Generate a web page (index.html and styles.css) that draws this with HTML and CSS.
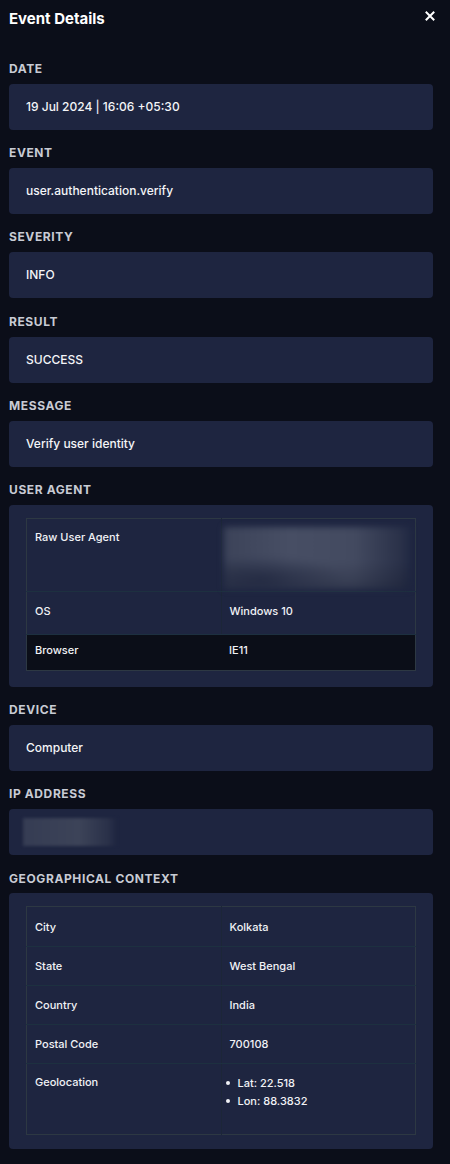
FILE: index.html
```html
<!DOCTYPE html>
<html>
<head>
<meta charset="utf-8">
<link rel="stylesheet" href="styles.css">
</head>
<body>
<div class="panel">
  <header class="head">
    <h1 class="title">Event Details</h1>
    <button class="close" aria-label="Close">
      <svg width="10" height="10" viewBox="0 0 10 10"><path d="M1.5 1.5 L8.5 8.5 M8.5 1.5 L1.5 8.5" stroke="#fff" stroke-width="2" stroke-linecap="square"/></svg>
    </button>
  </header>

  <section class="field">
    <div class="label">DATE</div>
    <div class="box">19 Jul 2024 <span class="sep">|</span> 16:06 +05:30</div>
  </section>
  <section class="field">
    <div class="label">EVENT</div>
    <div class="box">user.authentication.verify</div>
  </section>
  <section class="field">
    <div class="label">SEVERITY</div>
    <div class="box">INFO</div>
  </section>
  <section class="field">
    <div class="label">RESULT</div>
    <div class="box">SUCCESS</div>
  </section>
  <section class="field">
    <div class="label">MESSAGE</div>
    <div class="box">Verify user identity</div>
  </section>
  <section class="field">
    <div class="label">USER AGENT</div>
    <div class="box box-table box-ua">
      <table class="kv ua">
        <tr class="tall">
          <td>Raw User Agent</td>
          <td class="blurcell"><div class="blur-ua"></div></td>
        </tr>
        <tr class="os"><td>OS</td><td>Windows 10</td></tr>
        <tr class="hover"><td>Browser</td><td>IE11</td></tr>
      </table>
    </div>
  </section>
  <section class="field">
    <div class="label">DEVICE</div>
    <div class="box">Computer</div>
  </section>
  <section class="field">
    <div class="label">IP ADDRESS</div>
    <div class="box box-ip"><div class="blur-ip"></div></div>
  </section>
  <section class="field">
    <div class="label">GEOGRAPHICAL CONTEXT</div>
    <div class="box box-table box-geo">
      <table class="kv geo">
        <tr><td>City</td><td>Kolkata</td></tr>
        <tr><td>State</td><td>West Bengal</td></tr>
        <tr><td>Country</td><td>India</td></tr>
        <tr><td>Postal Code</td><td>700108</td></tr>
        <tr class="geoloc">
          <td>Geolocation</td>
          <td><ul class="coords"><li>Lat: 22.518</li><li>Lon: 88.3832</li></ul></td>
        </tr>
      </table>
    </div>
  </section>
</div>
</body>
</html>
```

FILE: styles.css
```css
html, body {
  margin: 0;
  padding: 0;
  background: #0b0e19;
}
body {
  font-family: Inter, "Noto Sans", "Liberation Sans", sans-serif;
  color: #f1f2f6;
  width: 450px;
  min-height: 1164px;
}
.panel {
  padding: 0 17px 0 9px;
}
.head {
  display: flex;
  justify-content: space-between;
  align-items: center;
  height: 36px;
  margin-bottom: 25px;
}
.title {
  margin: 0;
  font-size: 15px;
  font-weight: 700;
  color: #ffffff;
}
.close {
  background: none;
  border: 0;
  padding: 0;
  margin-right: -2px;
  width: 10px;
  height: 10px;
  display: flex;
  cursor: pointer;
  margin-top: -4px;
}
.field {
  margin-bottom: 15.2px;
}
.label {
  font-size: 12px;
  line-height: 16px;
  font-weight: 700;
  letter-spacing: 0.6px;
  color: #c8cbd4;
  margin-bottom: 7px;
}
.box {
  background: #1e2540;
  border-radius: 4px;
  padding: 14px 17px;
  font-size: 12px;
  font-weight: 500;
  line-height: 18px;
  color: #f4f5f8;
}
.sep {
  color: #e8e8f0;
}
.box-table {
  padding: 13px 17px 14px;
}
.box-ua {
  padding-bottom: 16px;
}
.box-geo {
  margin-top: -1px;
}
.kv {
  width: 100%;
  border-collapse: collapse;
  border: 1px solid #2d3843;
  font-size: 11px;
  font-weight: 500;
  line-height: 16px;
  color: #f1f2f6;
}
.kv td {
  padding: 11px 8px;
  vertical-align: top;
  border-bottom: 1px solid #1d3040;
  width: 50%;
}
.kv td:first-child {
  border-right: 1px solid #1c2638;
}
.kv tr:last-child td {
  border-bottom: 0;
}
.ua tr.tall td {
  padding-top: 10px;
  padding-bottom: 2px;
}
.ua tr.tall td.blurcell {
  padding: 8px 5px 2px 2px;
}
.blur-ua {
  height: 62px;
  background:
    radial-gradient(ellipse 45% 40% at 20% 85%, rgba(30,37,62,0.75) 0%, rgba(30,37,62,0) 100%),
    linear-gradient(180deg, rgba(0,0,0,0) 55%, rgba(20,26,45,0.35) 100%),
    linear-gradient(90deg, #3c4359 0%, #474e64 35%, #434a60 70%, #2a3149 95%, #222a44 100%);
  filter: blur(3px);
}
.ua tr.os td {
  padding-top: 11px;
  padding-bottom: 15px;
}
.ua tr.hover td {
  background: #0b0e18;
  padding-top: 7px;
  padding-bottom: 12px;
}
.ua tr.hover td:first-child {
  border-right: 0;
}
.geo tr td {
  padding: 11px 8px 11px;
}
.geo tr:first-child td {
  padding-top: 12px;
}
.geo tr.geoloc td {
  padding-top: 10px;
  padding-bottom: 24px;
}
.coords {
  margin: 0;
  padding: 0;
  list-style: none;
}
.coords li {
  position: relative;
  padding-left: 8px;
  line-height: 18px;
}
.coords li::before {
  content: "";
  position: absolute;
  left: -4px;
  top: 7px;
  width: 4px;
  height: 4px;
  border-radius: 50%;
  background: #f1f2f6;
}
.box-ip {
  padding: 9px 14px;
}
.blur-ip {
  width: 94px;
  height: 28px;
  background: linear-gradient(90deg, #353c53 0%, #3c4358 60%, #2a3149 90%, #1e2540 100%);
  filter: blur(1.5px);
}
```
